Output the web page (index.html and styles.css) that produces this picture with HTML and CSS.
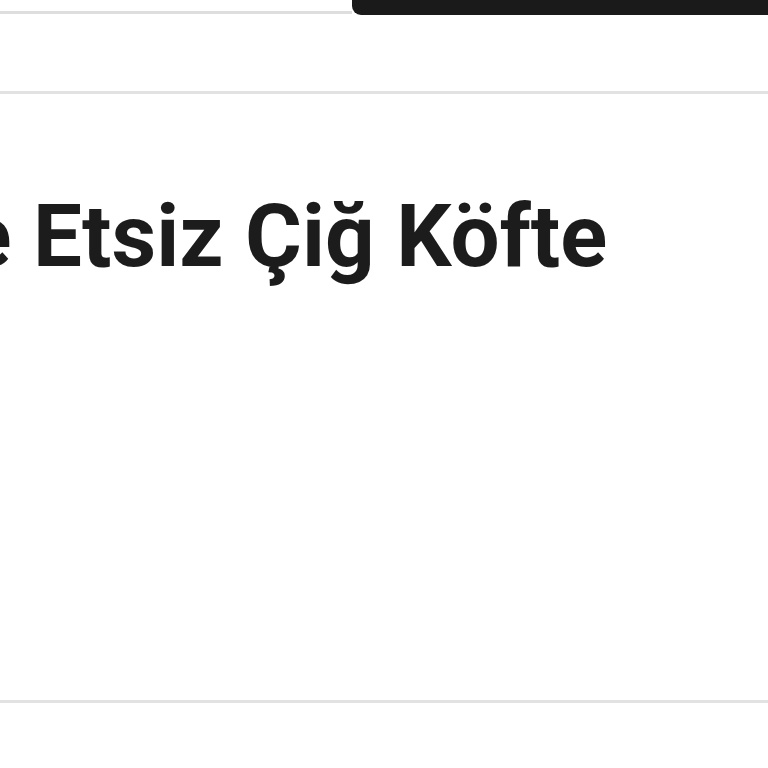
FILE: index.html
```html
<!DOCTYPE html>
<html lang="tr">
<head>
<meta charset="utf-8">
<link rel="stylesheet" href="styles.css">
</head>
<body>
<div class="top">
  <div class="top-left"><div class="top-rule"></div></div>
  <div class="top-bar"></div>
</div>
<div class="rule rule-upper"></div>
<section class="panel">
  <h1 class="title">ve Etsiz Çiğ Köfte</h1>
</section>
<div class="rule"></div>
</body>
</html>
```
FILE: styles.css
```css
html, body {
  margin: 0;
  padding: 0;
  width: 768px;
  height: 768px;
  overflow: hidden;
  background: #ffffff;
  font-family: Roboto, "Noto Sans", sans-serif;
}
.top {
  display: flex;
  height: 15px;
}
.top-left {
  flex: 0 0 352px;
  padding-top: 11px;
  box-sizing: border-box;
}
.top-rule {
  height: 3px;
  background: #dedede;
}
.top-bar {
  flex: 1;
  background: #1a1a1a;
  border-bottom-left-radius: 9px;
}
.rule {
  height: 3px;
  background: #e2e2e2;
}
.rule-upper {
  margin-top: 76px;
}
.panel {
  height: 606px;
  box-sizing: border-box;
  padding-top: 92px;
  overflow: hidden;
}
.title {
  margin: 0 0 0 -79px;
  font-size: 87px;
  font-weight: 700;
  line-height: 100px;
  color: #1c1c1c;
  white-space: nowrap;
  letter-spacing: 0;
}
```
